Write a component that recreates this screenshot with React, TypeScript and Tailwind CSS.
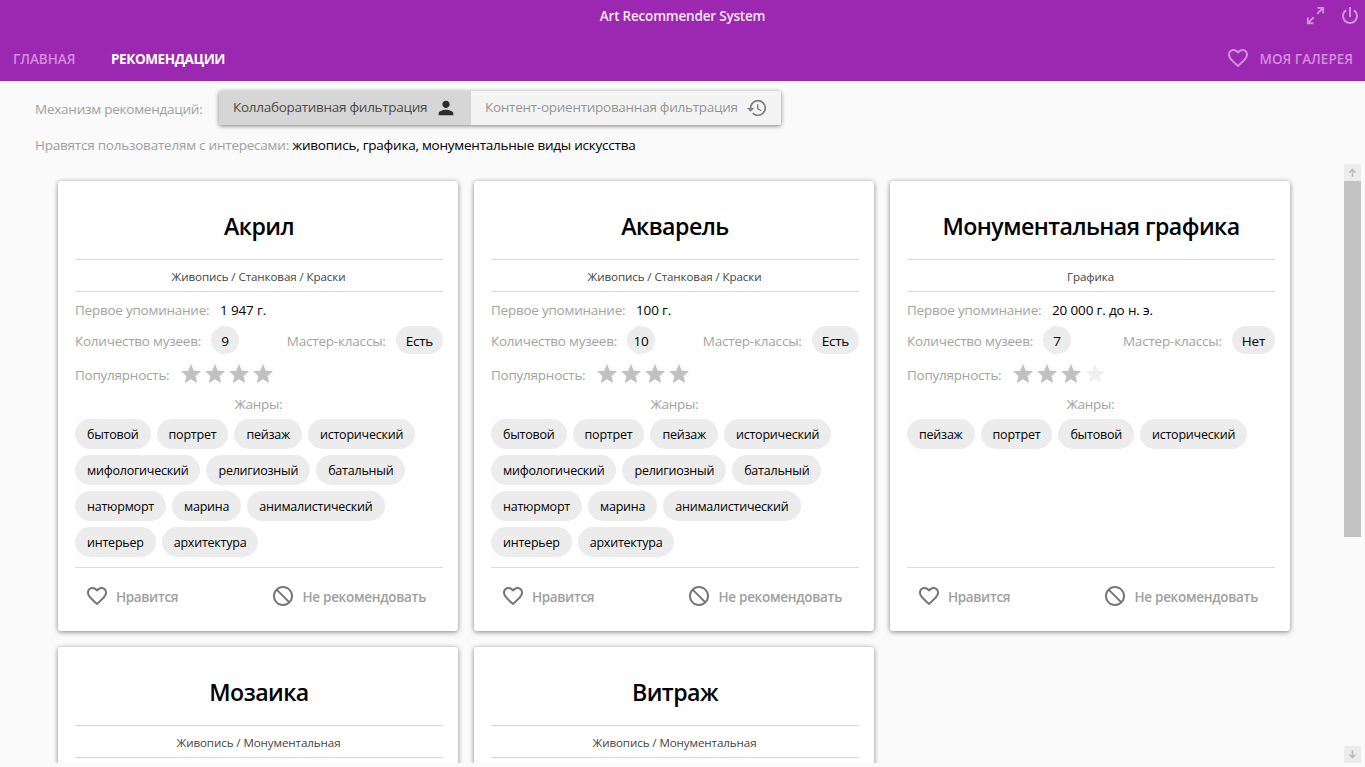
import { MdBlock, MdFavoriteBorder, MdPerson, MdStar } from "react-icons/md";

type Art = {
  title: string;
  path: string;
  year: string;
  museums: number;
  classes: string;
  stars: number;
  maxStars: number;
  genres: string[];
};

const allGenres = [
  "бытовой", "портрет", "пейзаж", "исторический", "мифологический", "религиозный",
  "батальный", "натюрморт", "марина", "анималистический", "интерьер", "архитектура",
];

const arts: Art[] = [
  { title: "Акрил", path: "Живопись / Станковая / Краски", year: "1 947 г.", museums: 9, classes: "Есть", stars: 4, maxStars: 4, genres: allGenres },
  { title: "Акварель", path: "Живопись / Станковая / Краски", year: "100 г.", museums: 10, classes: "Есть", stars: 4, maxStars: 4, genres: allGenres },
  { title: "Монументальная графика", path: "Графика", year: "20 000 г. до н. э.", museums: 7, classes: "Нет", stars: 3, maxStars: 4, genres: ["пейзаж", "портрет", "бытовой", "исторический"] },
];

const partialArts = [
  { title: "Мозаика", path: "Живопись / Монументальная" },
  { title: "Витраж", path: "Живопись / Монументальная" },
];

const cardClass = "flex w-[400px] shrink-0 flex-col rounded-[3px] bg-white pl-[17px] pr-[15px] shadow-[0_1px_5px_rgba(0,0,0,0.48)]";

function CardHeading({ title, path }: { title: string; path: string }) {
  return (
    <>
      <h2 className="flex h-[79px] shrink-0 items-end justify-center border-b border-[#dadada] pb-[16px] text-[23.2px] leading-[34px] font-semibold tracking-[-0.55px] whitespace-nowrap text-black">{title}</h2>
      <p className="flex h-8 shrink-0 items-center justify-center border-b border-[#dadada] pt-px pr-px text-[11.6px] tracking-[-0.1px] text-[#444]">{path}</p>
    </>
  );
}

function Card({ art }: { art: Art }) {
  return (
    <article className={`${cardClass} h-[450px]`}>
      <CardHeading title={art.title} path={art.path} />
      <div className="flex h-[34px] items-center pt-[3px]">
        <span className="w-[145px] text-[#a3a3a3]">Первое упоминание:</span>
        <span className="tracking-[-0.15px] text-black">{art.year}</span>
      </div>
      <div className="flex h-7 items-center text-[#a3a3a3]">
        <span className="w-[136px] pt-[3px]">Количество музеев:</span>
        <span className="flex h-7 w-7 items-center justify-center rounded-full bg-[#ececec] pt-[3px] text-black">{art.museums}</span>
        <span className="ml-auto pt-[3px] tracking-[-0.2px]">Мастер-классы:</span>
        <span className="ml-[10px] flex h-7 items-center rounded-full bg-[#ececec] px-[10px] pt-[3px] text-black">{art.classes}</span>
      </div>
      <div className="flex h-[38px] items-center pt-px text-[#a3a3a3]">
        <span className="w-[104px] pt-[3px]">Популярность:</span>
        {Array.from({ length: art.maxStars }, (_, i) => (
          <MdStar key={i} size={24} className={i < art.stars ? "text-[#c1c1c1]" : "text-[#f0f0f0]"} />
        ))}
      </div>
      <div className="flex h-[25px] items-center justify-center pr-px text-[#a3a3a3]">Жанры:</div>
      <div className="flex h-[150px] flex-wrap content-start gap-1.5 pt-0.5">
        {art.genres.map((g) => (
          <span key={g} className="flex h-[30px] items-center rounded-full bg-[#ececec] px-3 text-[12.5px] tracking-[-0.22px] text-black">{g}</span>
        ))}
      </div>
      <div className="flex h-[57px] items-center border-t border-[#dadada] pl-[10px] font-semibold tracking-[-0.35px] text-[#a0a0a0]">
        <MdFavoriteBorder size={24} className="text-[#757575]" />
        <span className="ml-[7px] pt-0.5">Нравится</span>
        <MdBlock size={24} className="mr-2 ml-auto -scale-x-100 text-[#757575]" />
        <span className="pt-0.5 pr-[17px] tracking-[-0.3px]">Не рекомендовать</span>
      </div>
    </article>
  );
}

function ScrollArrow({ down }: { down?: boolean }) {
  return (
    <div className="flex h-[17px] w-[17px] items-center justify-center bg-[#ececec]">
      <svg width="9" height="9" viewBox="0 0 9 9" fill="none" stroke="#bdbdbd" strokeWidth="1.6" className={down ? "rotate-180" : ""}>
        <path d="M4.5 9V1.5M1.5 4.5l3-3 3 3" />
      </svg>
    </div>
  );
}

export default function App() {
  return (
    <div className="flex h-[767px] w-[1365px] flex-col overflow-hidden bg-[#fafafa] font-['Open_Sans','Noto_Sans',sans-serif] text-[13.5px] leading-[21px] tracking-[-0.24px]">
      <header className="flex h-[81px] shrink-0 flex-col bg-[#9c27b0] font-semibold">
        <div className="grid h-8 grid-cols-[1fr_auto_1fr] items-center">
          <span />
          <h1 className="tracking-[-0.2px] text-[#f5e6f8]">Art Recommender System</h1>
          <div className="flex justify-end gap-[11px] pr-[3px] text-[#d18fdc]">
            <svg width="23" height="23" viewBox="0 0 24 24" fill="currentColor"><path d="M10,21V19H6.41L10.91,14.5L9.5,13.09L5,17.59V14H3V21H10M14.5,10.91L19,6.41V10H21V3H14V5H17.59L13.09,9.5L14.5,10.91Z" /></svg>
            <svg width="24" height="24" viewBox="0 0 24 24" fill="currentColor"><path d="M16.56,5.44L15.11,6.89C16.84,7.94 18,9.83 18,12A6,6 0 0,1 12,18A6,6 0 0,1 6,12C6,9.83 7.16,7.94 8.88,6.88L7.44,5.44C5.36,6.88 4,9.28 4,12A8,8 0 0,0 12,20A8,8 0 0,0 20,12C20,9.28 18.64,6.88 16.56,5.44M13,3H11V13H13" /></svg>
          </div>
        </div>
        <nav className="flex h-[49px] items-center pt-[5px] pr-3 pl-[13px] tracking-[0px] text-[#d18fdc]">
          <span className="w-[98px] tracking-[-0.05px]">ГЛАВНАЯ</span>
          <span className="font-bold tracking-[-0.4px] text-white">РЕКОМЕНДАЦИИ</span>
          <MdFavoriteBorder size={24} className="mr-[10px] mb-[2px] ml-auto" />
          <span>МОЯ ГАЛЕРЕЯ</span>
        </nav>
      </header>
      <section className="flex h-[83px] shrink-0 flex-col pl-[35px] whitespace-nowrap text-[#a0a0a0]">
        <div className="flex items-center pt-[10px]">
          <span className="w-[184px] pt-[3px]">Механизм рекомендаций:</span>
          <div className="flex h-[34px] overflow-hidden rounded-[2px] shadow-[0_1px_4px_rgba(0,0,0,0.5)]">
            <div className="flex w-[252px] items-center bg-[#d6d6d6] pl-[14px] text-[#4a4a4a]">
              <span className="w-[202px] pb-px tracking-[-0.28px]">Коллаборативная фильтрация</span>
              <MdPerson size={22} className="text-[#2b2b2b]" />
            </div>
            <div className="flex w-[310px] items-center bg-[#f4f4f4] pl-[14px] text-[#949494]">
              <span className="w-[261px] pb-px tracking-[-0.27px]">Контент-ориентированная фильтрация</span>
              <svg width="22" height="22" viewBox="0 0 24 24" fill="#808080"><path d="M13.5,8H12V13L16.28,15.54L17,14.33L13.5,12.25V8M13,3A9,9 0 0,0 4,12H1L4.96,16.03L9,12H6A7,7 0 0,1 13,5A7,7 0 0,1 20,12A7,7 0 0,1 13,19C11.07,19 9.32,18.21 8.06,16.94L6.64,18.36C8.27,20 10.5,21 13,21A9,9 0 0,0 22,12A9,9 0 0,0 13,3" /></svg>
            </div>
          </div>
        </div>
        <p className="pt-[10px] tracking-[-0.23px]">Нравятся пользователям с интересами: <span className="text-black">живопись, графика, монументальные виды искусства</span></p>
      </section>
      <main className="flex h-[599px] shrink-0">
        <div className="flex w-[1344px] flex-wrap content-start gap-4 overflow-hidden pt-[17px] pr-[54px] pl-[58px]">
          {arts.map((a) => <Card key={a.title} art={a} />)}
          {partialArts.map((a) => (
            <article key={a.title} className={`${cardClass} h-[450px]`}>
              <CardHeading title={a.title} path={a.path} />
            </article>
          ))}
        </div>
        <div className="flex w-[17px] flex-col justify-between">
          <div>
            <ScrollArrow />
            <div className="h-[356px] bg-[#c2c2c2]" />
          </div>
          <ScrollArrow down />
        </div>
      </main>
    </div>
  );
}
